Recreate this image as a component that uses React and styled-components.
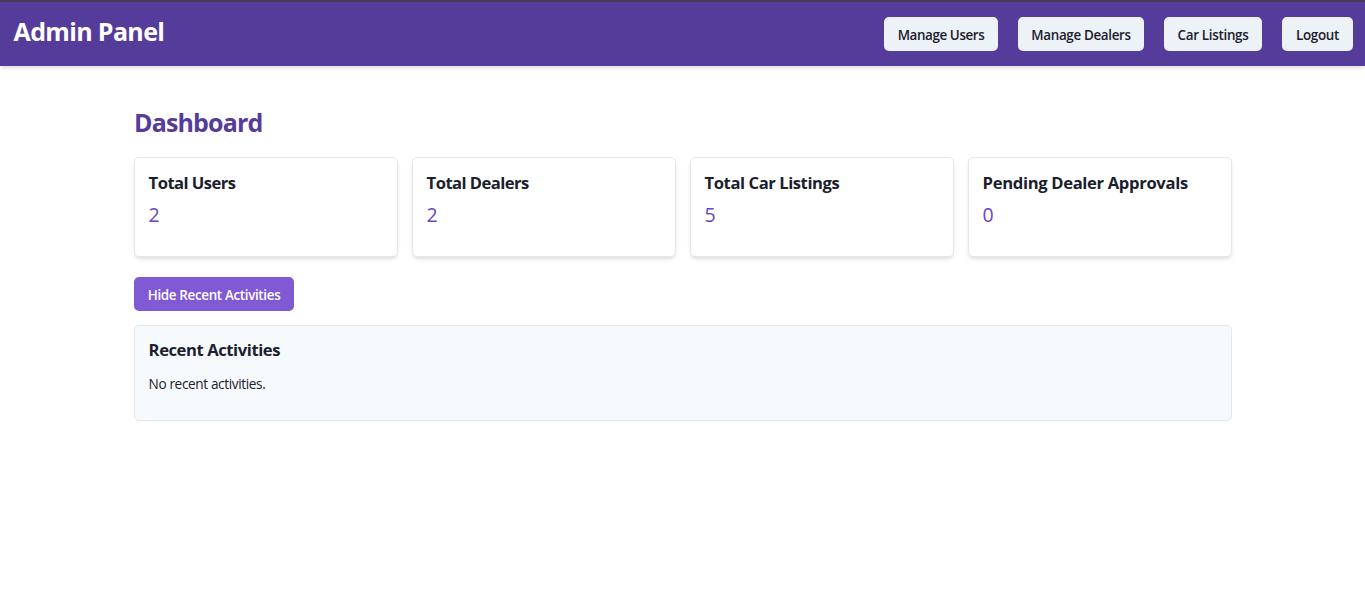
import React from "react";
import styled, { createGlobalStyle } from "styled-components";

const GlobalStyle = createGlobalStyle`
  * { box-sizing: border-box; }
  body {
    margin: 0;
    background: #fff;
    color: #1a202c;
    font-family: "Segoe UI", "Open Sans", "Noto Sans", sans-serif;
    font-size: 13.6px;
    line-height: 20px;
  }
  h1, h2, h3, p { margin: 0; white-space: nowrap; }
`;

const Header = styled.header`
  display: flex;
  justify-content: space-between;
  height: 66px;
  padding: 15px 12px 0 13.6px;
  border-top: 2px solid #443b57;
  background: #553c9a;
  box-shadow: 0 3px 5px -1px rgba(0, 0, 0, 0.1), 0 2px 3px -1px rgba(0, 0, 0, 0.06);
`;

const Brand = styled.h1`
  color: #fff;
  font-size: 25px;
  font-weight: 700;
  line-height: 29px;
  letter-spacing: -0.65px;
`;

const Nav = styled.nav`
  display: flex;
  gap: 20px;
`;

const Button = styled.button`
  width: ${(p) => p.$width}px;
  height: 34px;
  padding: 2px 0 0;
  border: 0;
  border-radius: 5px;
  background: ${(p) => (p.$primary ? "#805ad5" : "#edf2f7")};
  color: ${(p) => (p.$primary ? "#fff" : "#1a202c")};
  font-family: inherit;
  font-size: 13.4px;
  font-weight: 600;
  line-height: 20px;
  letter-spacing: ${(p) => p.$track || 0}px;
  white-space: nowrap;
`;

const Main = styled.main`
  width: 1098px;
  margin: 0 0 0 134px;
  padding-top: 40px;
`;

const PageTitle = styled.h2`
  margin-bottom: 18px;
  color: #553c9a;
  font-size: 25px;
  font-weight: 700;
  line-height: 33px;
  letter-spacing: -0.85px;
`;

const Stats = styled.section`
  display: grid;
  grid-template-columns: repeat(4, 1fr);
  gap: 14px;
  margin-bottom: 20px;
`;

const Card = styled.article`
  height: 100px;
  padding: 14px 13.6px;
  border: 1px solid #e2e8f0;
  border-radius: 5px;
  background: #fff;
  box-shadow: 0 3px 5px -1px rgba(0, 0, 0, 0.1), 0 2px 3px -1px rgba(0, 0, 0, 0.06);
`;

const CardTitle = styled.h3`
  font-size: 16.6px;
  font-weight: 700;
  line-height: 21px;
  letter-spacing: ${(p) => p.$track || 0}px;
`;

const Value = styled.p`
  margin-top: 7px;
  color: #6b46c1;
  font-size: 19.5px;
  line-height: 30px;
`;

const Activities = styled.section`
  height: 96px;
  margin-top: 14px;
  padding: 13px 13.6px;
  border: 1px solid #e2e8f0;
  border-radius: 5px;
  background: #f7fafc;
`;

const Note = styled.p`
  margin-top: 14px;
  letter-spacing: -0.37px;
`;

const links = [
  { label: "Manage Users", width: 114, track: -0.4 },
  { label: "Manage Dealers", width: 126, track: -0.33 },
  { label: "Car Listings", width: 98, track: -0.3 },
  { label: "Logout", width: 71, track: -0.3 },
];

const stats = [
  { label: "Total Users", value: 2, track: -0.55 },
  { label: "Total Dealers", value: 2, track: -0.54 },
  { label: "Total Car Listings", value: 5, track: -0.43 },
  { label: "Pending Dealer Approvals", value: 0, track: -0.33 },
];

export default function App() {
  return (
    <>
      <GlobalStyle />
      <Header>
        <Brand>Admin Panel</Brand>
        <Nav>
          {links.map((l) => (
            <Button key={l.label} $width={l.width} $track={l.track}>{l.label}</Button>
          ))}
        </Nav>
      </Header>
      <Main>
        <PageTitle>Dashboard</PageTitle>
        <Stats>
          {stats.map((s) => (
            <Card key={s.label}>
              <CardTitle $track={s.track}>{s.label}</CardTitle>
              <Value>{s.value}</Value>
            </Card>
          ))}
        </Stats>
        <Button $primary $width={160} $track={-0.33}>Hide Recent Activities</Button>
        <Activities>
          <CardTitle $track={-0.42}>Recent Activities</CardTitle>
          <Note>No recent activities.</Note>
        </Activities>
      </Main>
    </>
  );
}
